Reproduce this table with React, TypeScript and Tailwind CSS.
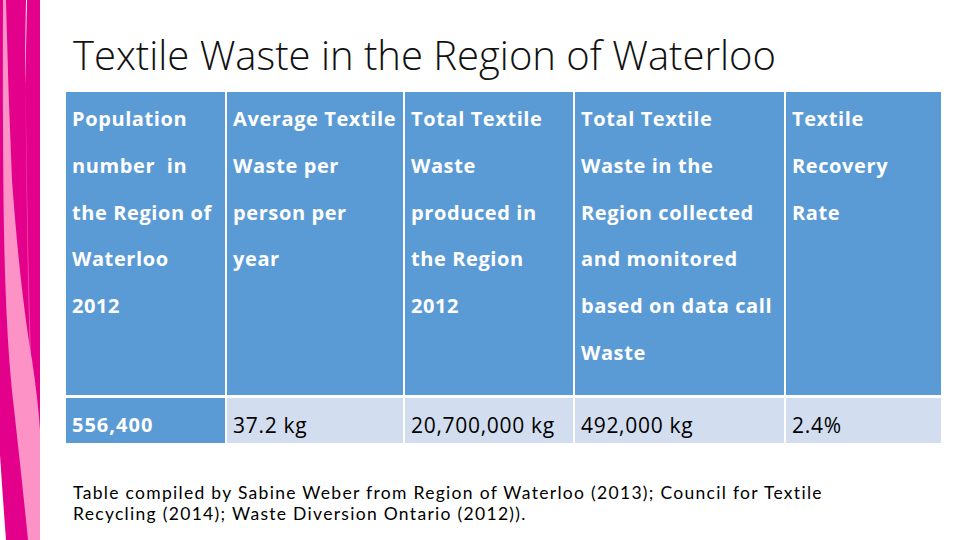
import React from 'react';

const header = [
  ['Population', 'number  in', 'the Region of', 'Waterloo', '2012'],
  ['Average Textile', 'Waste per', 'person per', 'year'],
  ['Total Textile', 'Waste', 'produced in', 'the Region', '2012'],
  ['Total Textile', 'Waste in the', 'Region collected', 'and monitored', 'based on data call', 'Waste'],
  ['Textile', 'Recovery', 'Rate'],
];

const values = ['556,400', '37.2 kg', '20,700,000 kg', '492,000 kg', '2.4%'];

const Ribbon = () => (
  <svg width="42" height="540" viewBox="0 0 42 540" className="shrink-0">
    <rect x="0" y="0" width="40" height="540" fill="#e3008b" />
    <path d="M0,455 Q3,500 6,540 L0,540 Z" fill="#ffffff" />
    <path d="M26,0 L27,0 Q26,40 25.5,85 Q25,60 26,0 Z" fill="#ffffff" />
    <path d="M25.5,80 Q27,220 31,360 L30,360 Q26,220 25.5,80 Z" fill="#f04aa9" />
    <path
      d="M3,0 L6,0 Q8,90 12,180 Q20,290 32,360 Q38,400 40,430 L40,540 L28,540 Q22,480 13,400 Q5,330 3.5,200 Q2.5,90 3,0 Z"
      fill="#fd92c6"
    />
  </svg>
);

export default function App() {
  return (
    <div className="w-[960px] h-[540px] bg-white flex overflow-hidden font-['Open_Sans',sans-serif]">
      <Ribbon />
      <div className="flex flex-col pl-[24px] pt-[31px]">
        <h1 className="px-[7px] text-[40px] leading-[48px] font-light text-[#111]">
          Textile Waste in the Region of Waterloo
        </h1>
        <div className="mt-[13px] grid grid-cols-[159px_176px_168px_209px_155px] gap-x-[2px] gap-y-[3px] w-[875px]">
          {header.map((lines, i) => (
            <div key={i} className="bg-[#5b9bd5] h-[303px] pt-[4px] pl-[6px] text-white font-bold text-[20px] tracking-[0.6px] leading-[46.8px]">
              {lines.map((l, j) => (
                <div key={j} className="whitespace-pre">{l}</div>
              ))}
            </div>
          ))}
          {values.map((v, i) => (
            <div
              key={i}
              className={
                i === 0
                  ? 'bg-[#5b9bd5] h-[45px] pt-[14px] pl-[6px] text-white font-bold text-[20px] tracking-[1px] leading-[26px]'
                  : 'bg-[#d2deef] h-[45px] pt-[14px] pl-[6px] text-black text-[21px] tracking-[0.7px] leading-[26px]'
              }
            >
              {v}
            </div>
          ))}
        </div>
        <p className="mt-[39px] px-[7px] font-['Lato',sans-serif] text-[17.5px] leading-[21px] tracking-[1.3px] text-black">
          Table compiled by Sabine Weber from Region of Waterloo (2013); Council for Textile
          <br />
          Recycling (2014); Waste Diversion Ontario (2012)).
        </p>
      </div>
    </div>
  );
}
